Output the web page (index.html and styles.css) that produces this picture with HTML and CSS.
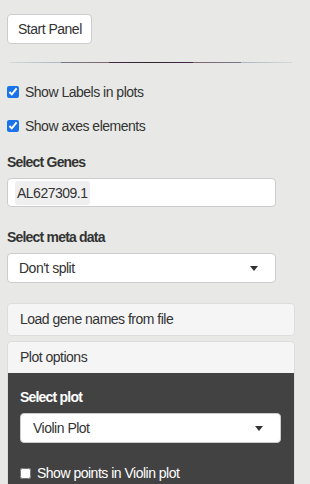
FILE: index.html
```html
<!DOCTYPE html>
<html lang="en">
<head>
  <meta charset="UTF-8" />
  <meta name="viewport" content="width=device-width, initial-scale=1.0"/>
  <title>Gene Panel</title>
  <link rel="stylesheet" href="styles.css">
</head>
<body>
  <div class="sidebar">
    <button class="btn">Start Panel</button>
    <hr class="fancy-rule">

    <label class="check"><input type="checkbox" checked> Show Labels in plots</label>
    <label class="check"><input type="checkbox" checked> Show axes elements</label>

    <div class="field-label">Select Genes</div>
    <div class="gene-input">
      <span class="chip">AL627309.1</span>
    </div>

    <div class="field-label meta">Select meta data</div>
    <div class="select-box">
      <span>Don't split</span>
      <span class="caret"></span>
    </div>

    <div class="panel first">
      <div class="panel-head">Load gene names from file</div>
    </div>
    <div class="panel">
      <div class="panel-head">Plot options</div>
      <div class="panel-body">
        <div class="field-label light">Select plot</div>
        <div class="select-box">
          <span>Violin Plot</span>
          <span class="caret"></span>
        </div>
        <label class="check light"><input type="checkbox"> Show points in Violin plot</label>
      </div>
    </div>
  </div>
</body>
</html>
```

FILE: styles.css
```css
:root {
  --bg: #e8e9e6;
  --text: #333;
  --border: #ccc;
  --panel: #f5f5f5;
  --dark: #424242;
}
html, body {
  margin: 0; padding: 0;
  background: var(--bg);
  color: var(--text);
  font-family: 'Liberation Sans', Arial, sans-serif;
  font-size: 14px;
  letter-spacing: -0.5px;
  overflow: hidden;
}
.sidebar {
  padding: 14px 15px 0 7px;
  display: flex;
  flex-direction: column;
  align-items: flex-start;
}
.btn {
  height: 30px;
  padding: 0 9px 0 10px;
  background: #fff;
  border: 1px solid var(--border);
  border-radius: 4px;
  font: inherit;
  letter-spacing: inherit;
  color: var(--text);
}
.fancy-rule {
  align-self: stretch;
  margin: 18px 3px 19px 3px;
  height: 1px;
  border: none;
  background: linear-gradient(to right,
    #d6d8d8 0%, #aab6c2 18%,
    #76768a 18.1%, #7a686e 35%,
    #48264a 35.1%, #2c282c 50%, #48264a 64.9%,
    #7a686e 65%, #76768a 81.9%,
    #aab6c2 82%, #d6d8d8 100%);
}
.check {
  display: flex;
  align-items: center;
  gap: 6px;
  height: 20px;
  margin-bottom: 14px;
  cursor: pointer;
}
.check input {
  width: 12px; height: 12px;
  margin: 0;
  accent-color: #1a73e8;
}
.check + .field-label { margin-top: 2px; }
.field-label {
  font-weight: bold;
  letter-spacing: -0.8px;
  line-height: 20px;
  margin-bottom: 6px;
}
.field-label.meta { margin-top: 20px; }
.gene-input {
  width: 269px;
  height: 29px;
  box-sizing: border-box;
  background: #fff;
  border: 1px solid var(--border);
  border-radius: 4px;
  padding: 2px 7px;
  display: flex;
  align-items: center;
}
.chip {
  background: #efefef;
  border-radius: 3px;
  padding: 4px 2px;
  line-height: 16px;
}
.select-box {
  width: 269px;
  height: 30px;
  box-sizing: border-box;
  background: #fff;
  border: 1px solid var(--border);
  border-radius: 4px;
  padding: 0 17px 0 11px;
  display: flex;
  align-items: center;
  justify-content: space-between;
}
.caret {
  width: 0; height: 0;
  border-left: 4.5px solid transparent;
  border-right: 4.5px solid transparent;
  border-top: 5px solid var(--text);
}
.panel {
  align-self: stretch;
  border: 1px solid #ddd;
  border-radius: 4px;
  background: var(--panel);
  margin-bottom: 5px;
  overflow: hidden;
}
.panel.first { margin-top: 20px; }
.panel-head {
  height: 31px;
  line-height: 31px;
  padding-left: 12px;
}
.panel-body {
  background: var(--dark);
  padding: 14px 14px 20px 13px;
  margin-left: -1px;
  margin-right: -1px;
}
.field-label.light, .check.light { color: #fff; }
.panel-body .select-box { width: 100%; padding-left: 12px; }
.check.light { margin-top: 20px; margin-bottom: 0; }
.check.light input { width: 11px; height: 11px; }
```
